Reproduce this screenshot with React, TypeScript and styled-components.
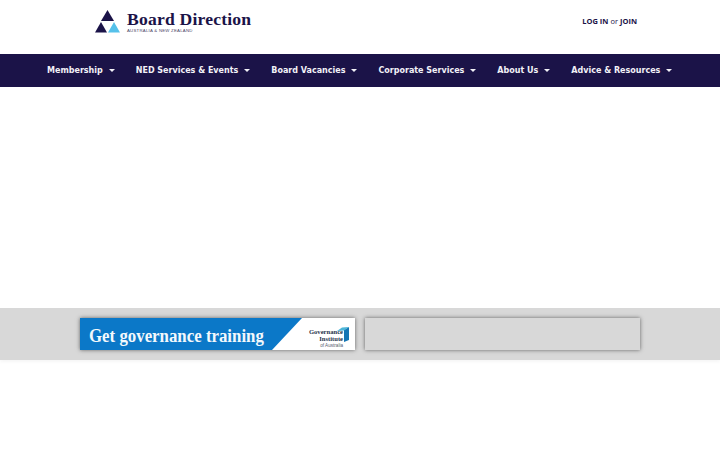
import React from "react";
import styled, { createGlobalStyle } from "styled-components";

const Global = createGlobalStyle`
  html, body { margin: 0; padding: 0; background: #fff; }
  body { font-family: "DejaVu Sans", sans-serif; }
`;

const Page = styled.div`
  width: 720px;
  height: 450px;
  overflow: hidden;
  background: #fff;
  display: flex;
  flex-direction: column;
`;

const Header = styled.header`
  height: 54px;
  flex: none;
  display: flex;
  align-items: flex-start;
  justify-content: space-between;
  padding: 0 83px 0 95px;
`;

const Brand = styled.div`
  display: flex;
  align-items: flex-start;
  gap: 7px;
  padding-top: 10px;
`;

const BrandText = styled.div`
  display: flex;
  flex-direction: column;
  padding-top: 1px;
`;

const BrandName = styled.div`
  font-family: "Liberation Serif", serif;
  font-weight: 700;
  font-size: 17.6px;
  line-height: 17px;
  color: #1b1348;
  letter-spacing: 0.2px;
  white-space: nowrap;
`;

const BrandSub = styled.div`
  font-family: "Liberation Sans", sans-serif;
  font-size: 4.3px;
  line-height: 5px;
  color: #4a4668;
  letter-spacing: 0.25px;
  white-space: nowrap;
`;

const Auth = styled.div`
  font-family: "Open Sans", sans-serif;
  font-size: 7.5px;
  font-weight: 700;
  color: #1b1348;
  padding-top: 16px;
  line-height: 10px;
  white-space: nowrap;
`;

const AuthOr = styled.span`
  font-weight: 400;
  margin: 0 2px;
`;

const Nav = styled.nav`
  height: 33px;
  flex: none;
  background: #1b1348;
  display: flex;
  align-items: center;
  padding-left: 47px;
  gap: 21px;
`;

const NavItem = styled.div`
  display: flex;
  align-items: center;
  gap: 6px;
  font-size: 8px;
  font-weight: 700;
  color: #f2f1f7;
  white-space: nowrap;
`;

const Caret = styled.span`
  width: 0;
  height: 0;
  border-left: 3px solid transparent;
  border-right: 3px solid transparent;
  border-top: 3px solid #f2f1f7;
`;

const Gap = styled.div`
  height: 221px;
  flex: none;
`;

const Band = styled.section`
  height: 52px;
  flex: none;
  background: #d8d8d8;
  display: flex;
  gap: 10px;
  padding: 10px 80px;
  box-sizing: border-box;
  box-shadow: 0 2px 3px rgba(0, 0, 0, 0.04);
`;

const AdSlot = styled.div`
  width: 275px;
  height: 32px;
  position: relative;
  background: #d8d8d8;
  box-shadow: 0 0 4px rgba(0, 0, 0, 0.55);
  overflow: hidden;
`;

const AdArt = styled.svg`
  position: absolute;
  inset: 0;
  width: 100%;
  height: 100%;
`;

const AdTitle = styled.div`
  position: absolute;
  left: 9px;
  top: 7px;
  font-family: "Liberation Serif", serif;
  font-weight: 700;
  font-size: 18.5px;
  line-height: 22px;
  color: #f3f8fc;
  white-space: nowrap;
  transform: scaleX(0.91);
  transform-origin: left center;
`;

const GovLogo = styled.div`
  position: absolute;
  right: 12px;
  top: 11px;
  width: 40px;
  text-align: right;
  font-family: "Liberation Serif", serif;
  font-weight: 700;
  font-size: 6.6px;
  line-height: 6.5px;
  color: #26324a;
`;

const GovSub = styled.div`
  font-family: "Liberation Sans", sans-serif;
  font-weight: 400;
  font-size: 4.6px;
  line-height: 7px;
  color: #555c6e;
`;

const items = [
  "Membership",
  "NED Services & Events",
  "Board Vacancies",
  "Corporate Services",
  "About Us",
  "Advice & Resources",
];

export default function App() {
  return (
    <Page>
      <Global />
      <Header>
        <Brand>
          <svg width="25" height="23" viewBox="0 0 25 23" aria-hidden="true">
            <polygon points="12.5,0 19,11 6,11" fill="#1b1348" />
            <polygon points="6,12 12,22.5 0,22.5" fill="#1b1348" />
            <polygon points="19,12 25,22.5 13,22.5" fill="#56c1ea" />
          </svg>
          <BrandText>
            <BrandName>Board Direction</BrandName>
            <BrandSub>AUSTRALIA &amp; NEW ZEALAND</BrandSub>
          </BrandText>
        </Brand>
        <Auth>
          LOG IN<AuthOr>or</AuthOr>JOIN
        </Auth>
      </Header>
      <Nav>
        {items.map((t) => (
          <NavItem key={t}>
            {t}
            <Caret />
          </NavItem>
        ))}
      </Nav>
      <Gap />
      <Band>
        <AdSlot>
          <AdArt viewBox="0 0 275 32" preserveAspectRatio="none" aria-hidden="true">
            <rect width="275" height="32" fill="#fff" />
            <polygon points="0,0 222,0 192,32 0,32" fill="#0b78c8" />
            <polygon points="264,12 269,9 269,22 264,24" fill="#1576b4" />
            <polygon points="257,13 262,9.5 269,9 264,12.5" fill="#4db6d8" />
          </AdArt>
          <AdTitle>Get governance training</AdTitle>
          <GovLogo>
            Governance
            <br />
            Institute
            <GovSub>of Australia</GovSub>
          </GovLogo>
        </AdSlot>
        <AdSlot />
      </Band>
    </Page>
  );
}
